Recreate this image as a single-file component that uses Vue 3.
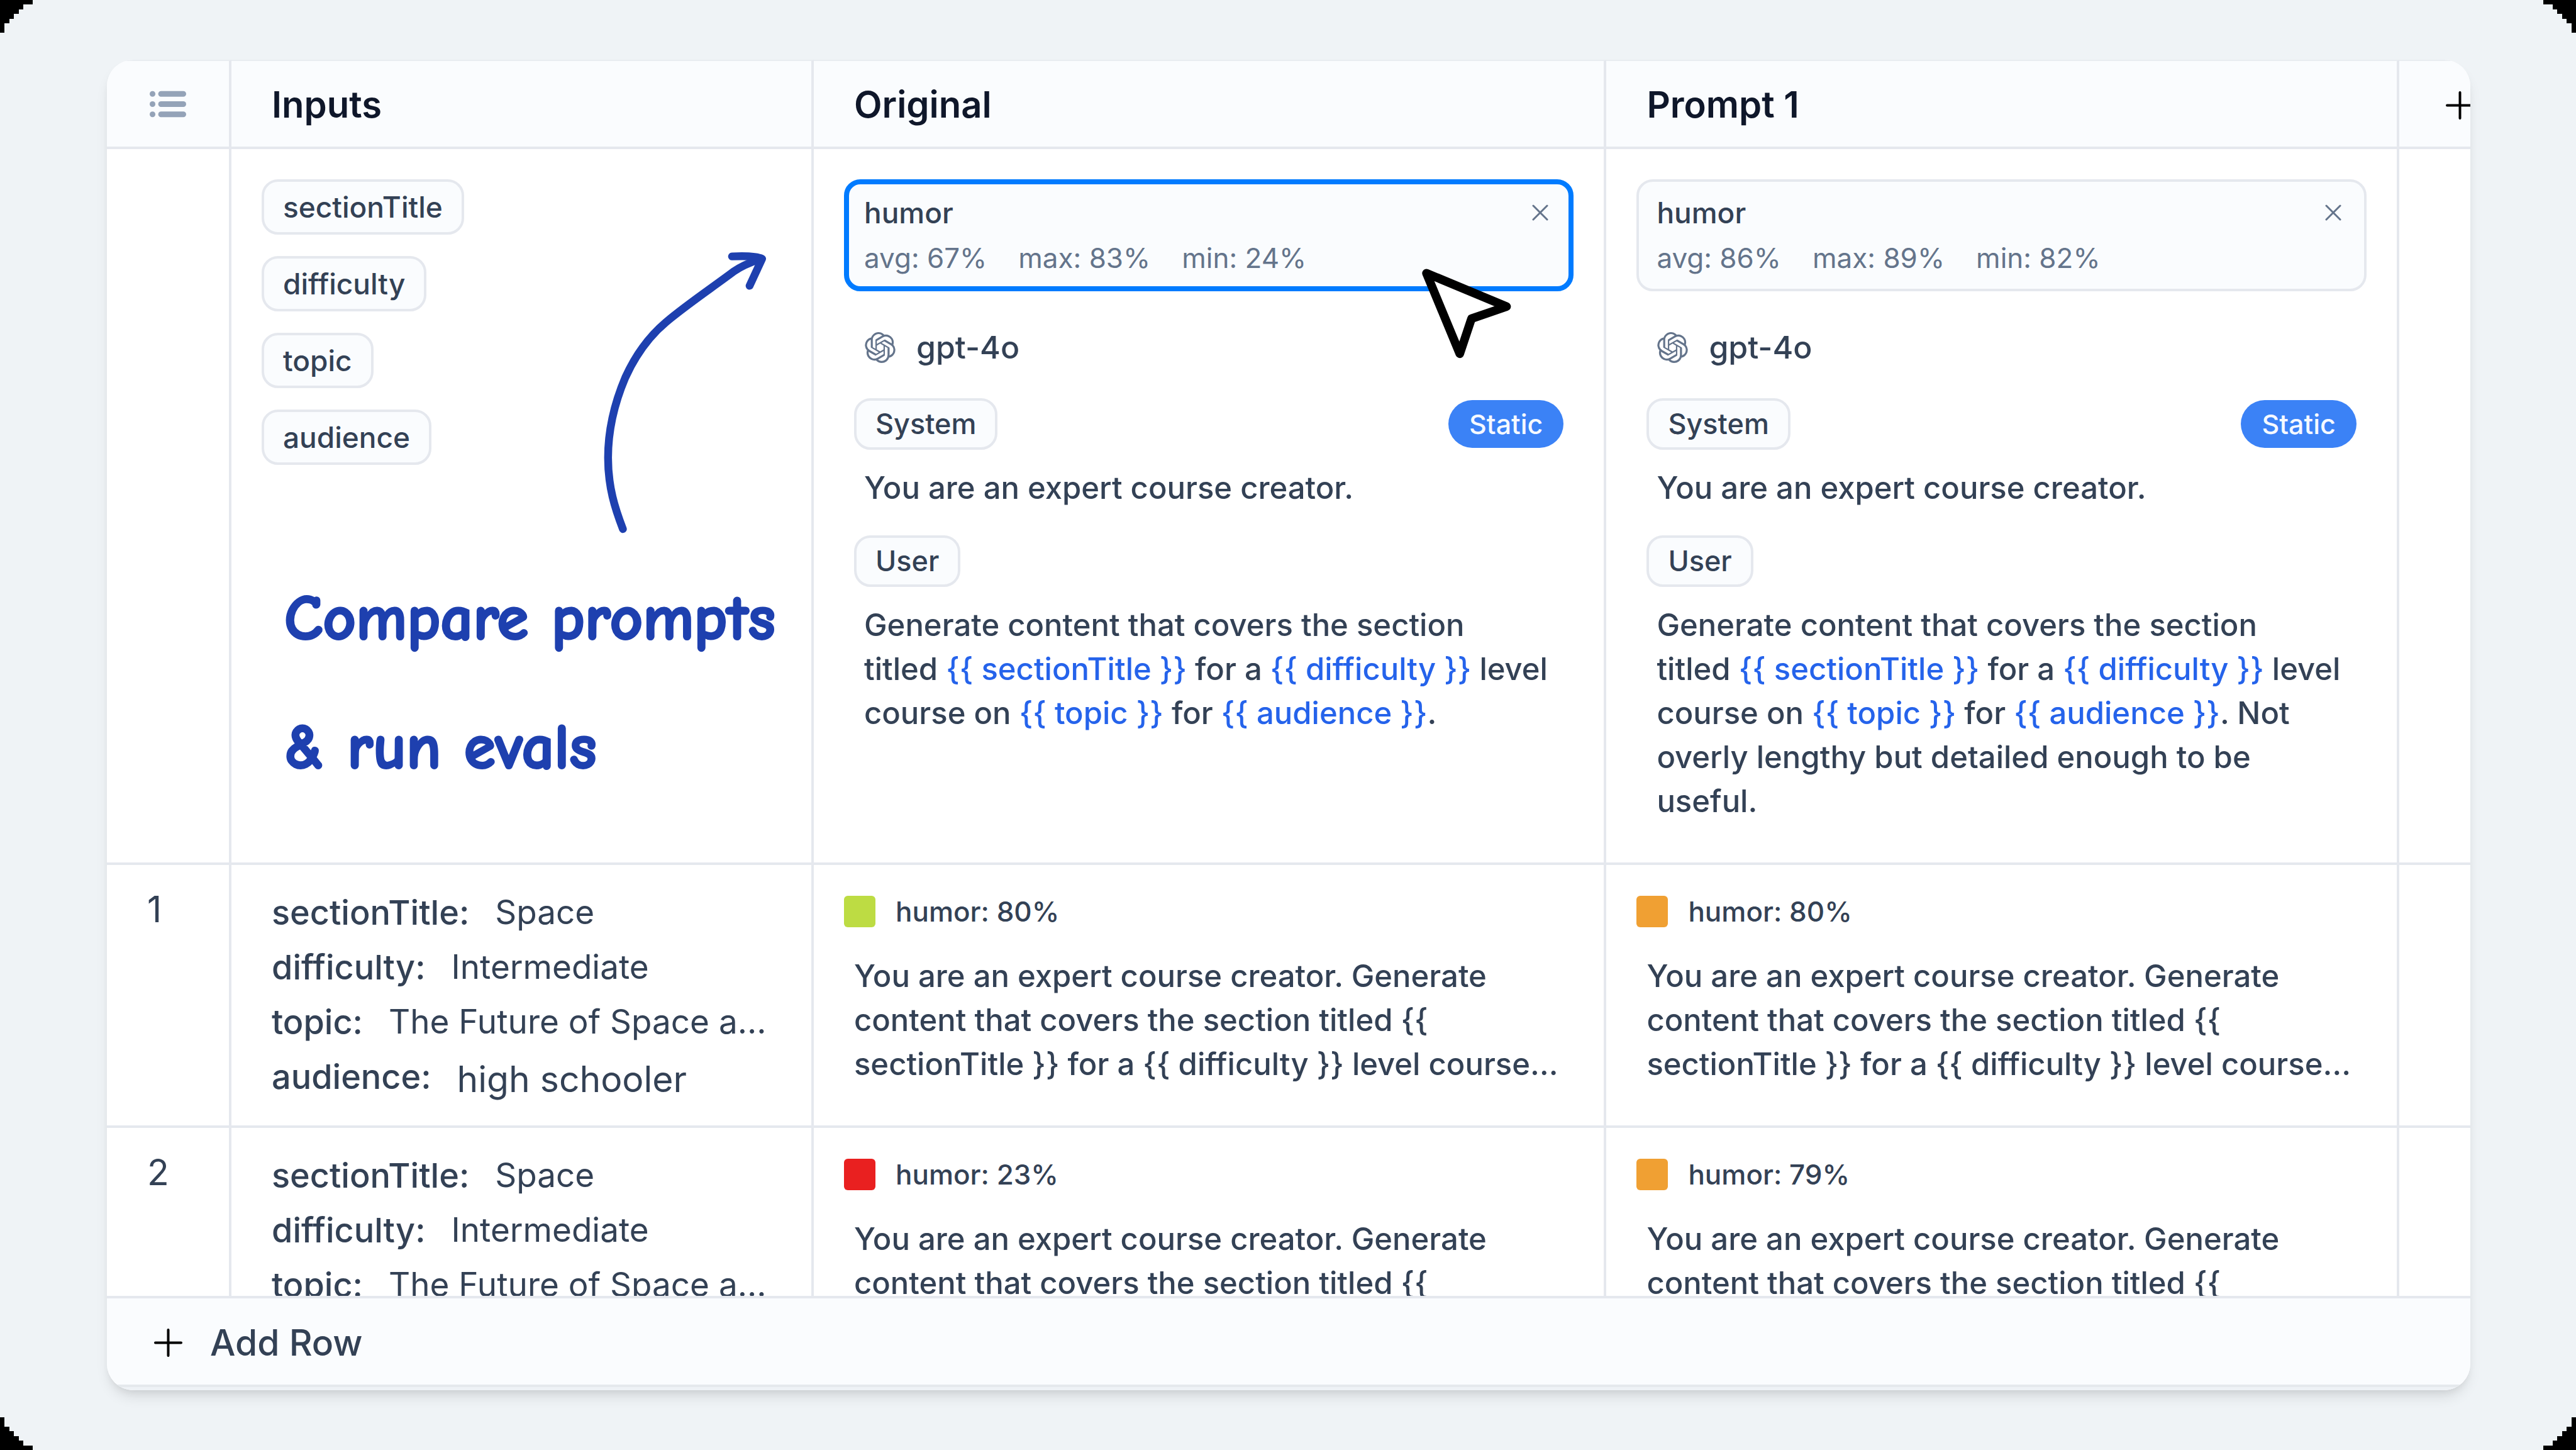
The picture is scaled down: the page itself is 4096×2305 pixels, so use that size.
<script setup>
import { h } from 'vue'

const inputs = ['sectionTitle', 'difficulty', 'topic', 'audience']

const basePrompt = [
  { text: 'Generate content that covers the section\ntitled ' },
  { text: '{{ sectionTitle }}', variable: true },
  { text: ' for a ' },
  { text: '{{ difficulty }}', variable: true },
  { text: ' level\ncourse on ' },
  { text: '{{ topic }}', variable: true },
  { text: ' for ' },
  { text: '{{ audience }}', variable: true },
]

const prompts = [
  {
    name: 'Original',
    selected: true,
    stats: ['avg: 67%', 'max: 83%', 'min: 24%'],
    user: [...basePrompt, { text: '.' }],
  },
  {
    name: 'Prompt 1',
    selected: false,
    stats: ['avg: 86%', 'max: 89%', 'min: 82%'],
    user: [...basePrompt, { text: '. Not\noverly lengthy but detailed enough to be useful.' }],
  },
]

const values = [
  { key: 'sectionTitle:', value: 'Space' },
  { key: 'difficulty:', value: 'Intermediate' },
  { key: 'topic:', value: 'The Future of Space a…' },
  { key: 'audience:', value: 'high schooler', large: true },
]

const output =
  'You are an expert course creator. Generate content that covers the section titled {{ sectionTitle }} for a {{ difficulty }} level course…'

const rows = [
  { id: 1, results: [{ label: 'humor: 80%', tone: 'lime' }, { label: 'humor: 80%', tone: 'orange' }] },
  { id: 2, results: [{ label: 'humor: 23%', tone: 'red' }, { label: 'humor: 79%', tone: 'orange' }] },
]

const corners = ['tl', 'tr', 'bl', 'br']

const PlusIcon = () =>
  h('svg', { viewBox: '0 0 45 45', 'aria-hidden': 'true' }, [
    h('path', { d: 'M22.5 2V43M2 22.5H43', fill: 'none', stroke: '#000', 'stroke-width': 4, 'stroke-linecap': 'round' }),
  ])
</script>

<template>
  <main class="page">
    <svg v-for="c in corners" :key="c" class="corner" :class="c" viewBox="0 0 7 7" aria-hidden="true">
      <path d="M0 0H7V1H5V2H4V3H3V4H2V5H1V7H0Z" />
    </svg>

    <section class="card">
      <div class="table-wrap">
        <table>
          <colgroup>
            <col class="col-index" />
            <col class="col-inputs" />
            <col class="col-prompt" />
            <col class="col-prompt" />
            <col />
          </colgroup>
          <thead>
            <tr>
              <th class="index">
                <button type="button" class="icon-button" aria-label="Row options">
                  <svg class="list-icon" viewBox="0 0 64 46" aria-hidden="true">
                    <g fill="#94a3b8">
                      <circle cx="5" cy="5" r="5" /><rect x="15" y="0" width="49" height="10" rx="5" />
                      <circle cx="5" cy="23" r="5" /><rect x="15" y="18" width="49" height="10" rx="5" />
                      <circle cx="5" cy="41" r="5" /><rect x="15" y="36" width="49" height="10" rx="5" />
                    </g>
                  </svg>
                </button>
              </th>
              <th>Inputs</th>
              <th v-for="p in prompts" :key="p.name">{{ p.name }}</th>
              <th class="add-column">
                <button type="button" class="icon-button" aria-label="Add prompt"><PlusIcon class="plus" /></button>
              </th>
            </tr>
          </thead>
          <tbody>
            <tr class="prompt-row">
              <td></td>
              <td class="inputs-cell">
                <ul class="pills">
                  <li v-for="name in inputs" :key="name" class="pill">{{ name }}</li>
                </ul>
                <svg class="arrow" viewBox="90 56 830 1440" aria-hidden="true">
                  <g fill="none" stroke="#1e40af" stroke-width="40" stroke-linecap="round" stroke-linejoin="round">
                    <path d="M188 1474C148 1370 112 1260 112 1110C112 960 145 830 200 700C250 590 320 490 410 415C510 330 640 243 755 157C790 132 840 110 895 92" />
                    <path d="M746 80C810 77 870 78 900 92L836 230" />
                  </g>
                </svg>
                <p class="note">Compare prompts<br />&amp; run evals</p>
              </td>
              <td v-for="p in prompts" :key="p.name" class="prompt-cell">
                <div class="metric" :class="{ selected: p.selected }">
                  <div class="metric-head">
                    <span>humor</span>
                    <button type="button" class="icon-button" aria-label="Remove humor">
                      <svg class="close" viewBox="0 0 26 26" aria-hidden="true">
                        <path d="M2 2L24 24M24 2L2 24" fill="none" stroke="#64748b" stroke-width="3" stroke-linecap="round" />
                      </svg>
                    </button>
                  </div>
                  <div class="stats"><span v-for="s in p.stats" :key="s">{{ s }}</span></div>
                </div>
                <div class="model">
                  <svg class="openai" viewBox="0 0 24 24" aria-hidden="true">
                    <path fill="#64748b" d="M22.2819 9.8211a5.9847 5.9847 0 0 0-.5157-4.9108 6.0462 6.0462 0 0 0-6.5098-2.9A6.0651 6.0651 0 0 0 4.9807 4.1818a5.9847 5.9847 0 0 0-3.9977 2.9 6.0462 6.0462 0 0 0 .7427 7.0966 5.98 5.98 0 0 0 .511 4.9107 6.051 6.051 0 0 0 6.5146 2.9001A5.9847 5.9847 0 0 0 13.2599 24a6.0557 6.0557 0 0 0 5.7718-4.2058 5.9894 5.9894 0 0 0 3.9977-2.9001 6.0557 6.0557 0 0 0-.7475-7.0729zm-9.022 12.6081a4.4755 4.4755 0 0 1-2.8764-1.0408l.1419-.0804 4.7783-2.7582a.7948.7948 0 0 0 .3927-.6813v-6.7369l2.02 1.1686a.071.071 0 0 1 .038.052v5.5826a4.504 4.504 0 0 1-4.4945 4.4944zm-9.6607-4.1254a4.4708 4.4708 0 0 1-.5346-3.0137l.142.0852 4.783 2.7582a.7712.7712 0 0 0 .7806 0l5.8428-3.3685v2.3324a.0804.0804 0 0 1-.0332.0615L9.74 19.9502a4.4992 4.4992 0 0 1-6.1408-1.6464zM2.3408 7.8956a4.485 4.485 0 0 1 2.3655-1.9728V11.6a.7664.7664 0 0 0 .3879.6765l5.8144 3.3543-2.0201 1.1685a.0757.0757 0 0 1-.071 0l-4.8303-2.7865A4.504 4.504 0 0 1 2.3408 7.872zm16.5963 3.8558L13.1038 8.364 15.1192 7.2a.0757.0757 0 0 1 .071 0l4.8303 2.7913a4.4944 4.4944 0 0 1-.6765 8.1042v-5.6772a.79.79 0 0 0-.407-.667zm2.0107-3.0231l-.142-.0852-4.7735-2.7818a.7759.7759 0 0 0-.7854 0L9.409 9.2297V6.8974a.0662.0662 0 0 1 .0284-.0615l4.8303-2.7866a4.4992 4.4992 0 0 1 6.6802 4.66zM8.3065 12.863l-2.02-1.1638a.0804.0804 0 0 1-.038-.0567V6.0742a4.4992 4.4992 0 0 1 7.3757-3.4537l-.142.0805L8.704 5.459a.7948.7948 0 0 0-.3927.6813zm1.0976-2.3654l2.602-1.4998 2.6069 1.4998v2.9994l-2.5974 1.4997-2.6067-1.4997Z" />
                  </svg>
                  <span>gpt-4o</span>
                </div>
                <div class="role">
                  <span class="pill role-pill">System</span>
                  <span class="badge">Static</span>
                </div>
                <p class="message">You are an expert course creator.</p>
                <div class="role">
                  <span class="pill role-pill">User</span>
                </div>
                <p class="message"><template v-for="(part, i) in p.user" :key="i"><span v-if="part.variable" class="variable">{{ part.text }}</span><template v-else>{{ part.text }}</template></template></p>
                <svg v-if="p.selected" class="cursor" viewBox="74 54 458 460" aria-hidden="true">
                  <path d="M97 77L508 248L328 310L268 490Z" fill="#fff" stroke="#000" stroke-width="44" stroke-linejoin="round" />
                </svg>
              </td>
              <td></td>
            </tr>
            <tr v-for="row in rows" :key="row.id" class="data-row">
              <td class="number">{{ row.id }}</td>
              <td class="values">
                <div v-for="v in values" :key="v.key" class="value-line">
                  <span class="key">{{ v.key }}</span>
                  <span class="value" :class="{ large: v.large }">{{ v.value }}</span>
                </div>
              </td>
              <td v-for="(r, i) in row.results" :key="i" class="result">
                <div class="score"><span class="swatch" :class="r.tone"></span>{{ r.label }}</div>
                <p class="output">{{ output }}</p>
              </td>
              <td></td>
            </tr>
          </tbody>
        </table>
      </div>
      <footer class="footer">
        <button type="button" class="add-row"><PlusIcon class="plus" />Add Row</button>
      </footer>
    </section>
  </main>
</template>

<style>
body {
  background: #eff3f6;
}
</style>

<style scoped>
* {
  box-sizing: border-box;
}
.page {
  position: relative;
  display: flex;
  height: 100vh;
  padding: 95px 168px 95px 170px;
  overflow: hidden;
  background: #eff3f6;
  color: #334155;
  font-family: Inter, sans-serif;
  font-size: 49px;
  font-weight: 450;
}
.corner {
  position: absolute;
  width: 52px;
  height: 52px;
  shape-rendering: crispEdges;
}
.tl { top: 0; left: 0; }
.tr { top: 0; right: 0; transform: scaleX(-1); }
.bl { bottom: 0; left: 0; transform: scaleY(-1); }
.br { bottom: 0; right: 0; transform: scale(-1); }

.card {
  display: flex;
  flex-direction: column;
  flex: 1;
  min-width: 0;
  overflow: hidden;
  border-radius: 42px;
  background: #fff;
  box-shadow: 0 14px 21px -4px rgba(0, 0, 0, 0.1), 0 7px 14px -7px rgba(0, 0, 0, 0.1);
}
.table-wrap {
  flex: 1;
  min-height: 0;
  overflow: hidden;
}
table {
  width: 100%;
  table-layout: fixed;
  border-collapse: separate;
  border-spacing: 0;
}
.col-index { width: 198px; }
.col-inputs { width: 24.64%; }
.col-prompt { width: 33.54%; }
th,
td {
  padding: 0;
  border-right: 4px solid #e5e8ee;
  border-bottom: 4px solid #e5e8ee;
  text-align: left;
  vertical-align: top;
}
th:last-child,
td:last-child {
  border-right: 0;
}
th {
  height: 142px;
  padding: 2px 0 0 64px;
  border-top: 2px solid #e9edf1;
  background: #fafcfe;
  color: #0f172a;
  font-size: 58px;
  font-weight: 600;
  vertical-align: middle;
}
button {
  padding: 0;
  border: 0;
  background: none;
  color: inherit;
  font: inherit;
}
.icon-button {
  display: flex;
}
th.index {
  padding: 0 0 0 68px;
}
th.add-column {
  padding: 4px 0 0 74px;
}
.list-icon {
  width: 58px;
  height: 43px;
}
.plus {
  flex: none;
  width: 45px;
  height: 45px;
}

.prompt-row td {
  height: 1138px;
}
.inputs-cell {
  position: relative;
  padding: 48px 0 0 48px;
}
.pills {
  display: flex;
  flex-direction: column;
  align-items: flex-start;
  gap: 34px;
  margin: 0;
  padding: 0;
  list-style: none;
}
.pill {
  padding: 0 30px;
  border: 4px solid #e5e8ee;
  border-radius: 26px;
  background: #fafcfe;
  font-size: 46px;
  line-height: 80px;
}
.role-pill {
  font-size: 45px;
  line-height: 74px;
}
.arrow {
  position: absolute;
  top: 163px;
  right: 72px;
  width: 258px;
  height: 448px;
}
.note {
  margin: 142px 0 0 36px;
  color: #1e40af;
  font-family: "Comic Neue", "Open Sans Condensed", cursive;
  font-size: 102px;
  font-weight: 700;
  line-height: 205px;
  white-space: nowrap;
  -webkit-text-stroke: 3px #1e40af;
}

.prompt-cell {
  position: relative;
  padding: 48px 48px 0;
}
.metric {
  padding: 13px 36px 13px 28px;
  border: 4px solid #e5e8ee;
  border-radius: 26px;
  background: #fafcfe;
  font-size: 46px;
  line-height: 72px;
}
.metric.selected {
  padding: 9px 32px 9px 24px;
  border: 8px solid #007bff;
}
.metric-head {
  display: flex;
  align-items: center;
  justify-content: space-between;
}
.close {
  width: 26px;
  height: 26px;
}
.stats {
  display: flex;
  gap: 50px;
  color: #64748b;
  font-size: 44px;
  font-weight: 400;
}
.model {
  display: flex;
  align-items: center;
  gap: 33px;
  margin: 48px 0 40px 33px;
  font-size: 50px;
  line-height: 82px;
}
.openai {
  width: 49px;
  height: 49px;
}
.role {
  display: flex;
  align-items: center;
  justify-content: space-between;
  padding: 0 16px;
}
.badge {
  padding: 0 33px;
  border-radius: 38px;
  background: #3b82f6;
  color: #f5f9ff;
  font-size: 43px;
  font-weight: 500;
  line-height: 76px;
}
.message {
  margin: 26px 16px 0 32px;
  line-height: 70px;
  white-space: pre-line;
}
.message + .role {
  margin-top: 40px;
}
.variable {
  color: #2563eb;
}
.cursor {
  position: absolute;
  top: 190px;
  right: 147px;
  width: 142px;
  height: 143px;
}

.data-row td {
  height: 418px;
}
.number {
  padding: 28px 0 0 64px;
  font-size: 57px;
  font-weight: 400;
  line-height: 86px;
}
.values {
  padding: 32px 0 0 64px;
  font-size: 54px;
  line-height: 87px;
}
.value-line {
  display: flex;
  align-items: flex-start;
  gap: 41px;
}
.key {
  font-weight: 500;
}
.value {
  font-size: 53px;
  font-weight: 400;
}
.value.large {
  font-size: 57px;
  line-height: 96px;
}
.result {
  padding: 49px 48px 0;
}
.score {
  display: flex;
  align-items: center;
  gap: 32px;
  font-size: 44px;
  line-height: 50px;
}
.swatch {
  width: 50px;
  height: 50px;
  border-radius: 6px;
}
.lime { background: #bddc43; }
.orange { background: #f0a033; }
.red { background: #e92020; }
.output {
  margin: 43px 16px 0;
  line-height: 70px;
}

.footer {
  flex: none;
  display: flex;
  height: 150px;
  padding: 0 75px;
  border-top: 4px solid #e5e8ee;
  border-bottom: 5px solid #eef2f6;
  background: #fafcfe;
  box-shadow: inset 0 -4px 0 #e5e9ed;
}
.add-row {
  display: flex;
  align-items: center;
  gap: 44px;
  font-size: 57px;
  font-weight: 500;
}
</style>
